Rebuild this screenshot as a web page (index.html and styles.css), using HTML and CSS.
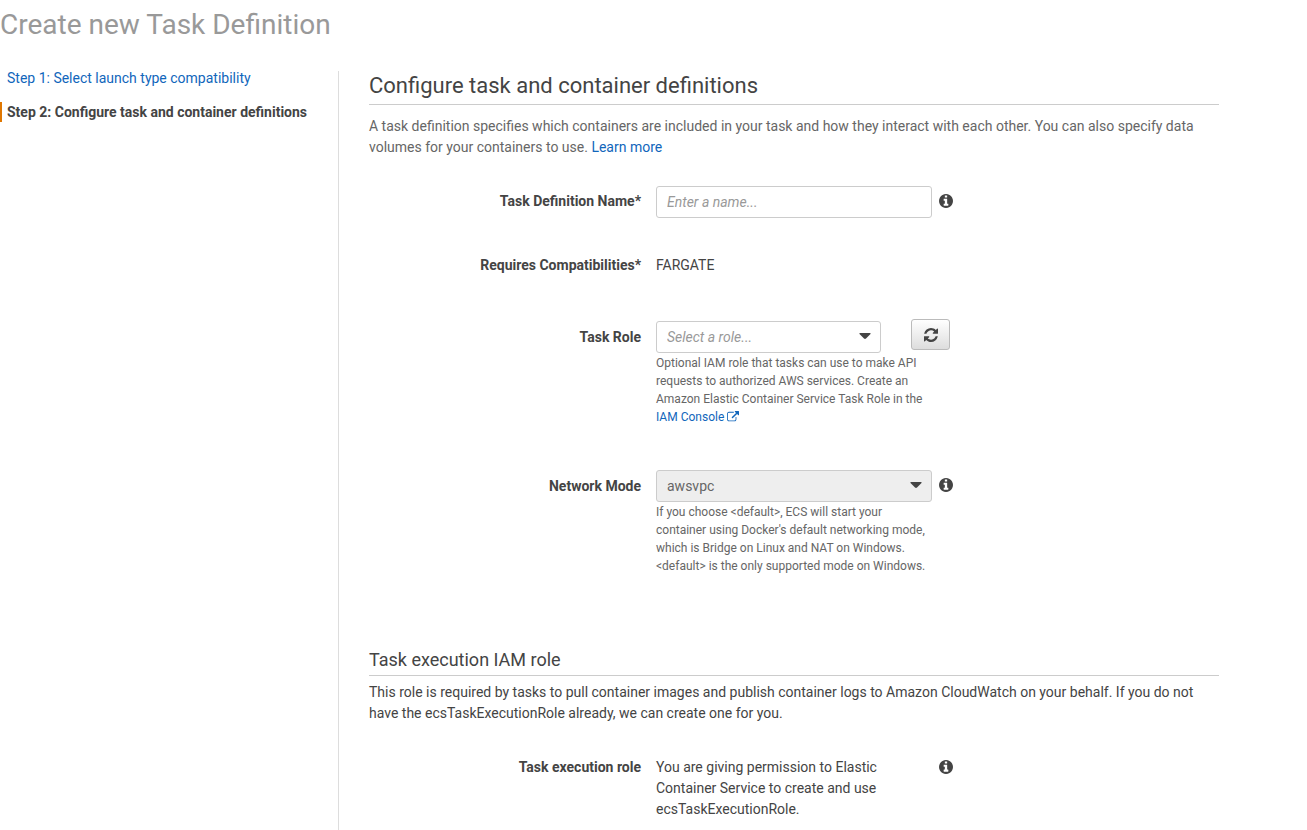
FILE: index.html
```html
<!DOCTYPE html>
<html lang="en">
<head>
<meta charset="utf-8">
<meta name="viewport" content="width=device-width, initial-scale=1">
<title>Create new Task Definition</title>
<link rel="stylesheet" href="styles.css">
</head>
<body>
<svg class="sprite" aria-hidden="true">
  <symbol id="icon-info" viewBox="128 128 1536 1536"><path d="M1152 1376v-160q0-14-9-23t-23-9h-96v-512q0-14-9-23t-23-9h-320q-14 0-23 9t-9 23v160q0 14 9 23t23 9h96v320h-96q-14 0-23 9t-9 23v160q0 14 9 23t23 9h448q14 0 23-9t9-23zm-128-896v-160q0-14-9-23t-23-9h-192q-14 0-23 9t-9 23v160q0 14 9 23t23 9h192q14 0 23-9t9-23zm640 416q0 209-103 385.5t-279.5 279.5-385.5 103-385.5-103-279.5-279.5-103-385.5 103-385.5 279.5-279.5 385.5-103 385.5 103 279.5 279.5 103 385.5z"/></symbol>
  <symbol id="icon-refresh" viewBox="128 128 1536 1536"><path d="M1639 1056q0 5-1 7-64 268-268 434.5t-478 166.5q-146 0-282.5-55t-243.5-157l-129 129q-19 19-45 19t-45-19-19-45v-448q0-26 19-45t45-19h448q26 0 45 19t19 45-19 45l-137 137q71 66 161 102t187 36q134 0 250-65t186-179q11-17 53-117 8-23 30-23h192q13 0 22.5 9.5t9.5 22.5zm25-800v448q0 26-19 45t-45 19h-448q-26 0-45-19t-19-45 19-45l138-138q-148-137-349-137-134 0-250 65t-186 179q-11 17-53 117-8 23-30 23h-199q-13 0-22.5-9.5t-9.5-22.5v-7q65-268 270-434.5t480-166.5q146 0 284 55.5t245 156.5l130-129q19-19 45-19t45 19 19 45z"/></symbol>
  <symbol id="icon-external" viewBox="0 0 1792 1792"><path d="M1408 928v320q0 119-84.5 203.5t-203.5 84.5h-832q-119 0-203.5-84.5t-84.5-203.5v-832q0-119 84.5-203.5t203.5-84.5h704q14 0 23 9t9 23v64q0 14-9 23t-23 9h-704q-66 0-113 47t-47 113v832q0 66 47 113t113 47h832q66 0 113-47t47-113v-320q0-14 9-23t23-9h64q14 0 23 9t9 23zm384-864v512q0 26-19 45t-45 19-45-19l-176-176-652 652q-10 10-23 10t-23-10l-114-114q-10-10-10-23t10-23l652-652-176-176q-19-19-19-45t19-45 45-19h512q26 0 45 19t19 45z"/></symbol>
  <symbol id="icon-caret" viewBox="0 0 12 6"><path d="M1 0h10q1 0 .5 1L7 5.500q-1 .8-2 0L.5 1Q0 0 1 0z"/></symbol>
</svg>

<h1 class="page-title">Create new Task Definition</h1>

<div class="wizard">
  <nav class="steps" aria-label="Steps">
    <ol class="step-list">
      <li class="step"><a class="link" href="#">Step 1: Select launch type compatibility</a></li>
      <li class="step step-current" aria-current="step">Step 2: Configure task and container definitions</li>
    </ol>
  </nav>

  <main class="content">
    <form class="panel">
      <h2 class="heading">Configure task and container definitions</h2>
      <p class="intro">A task definition specifies which containers are included in your task and how they interact with each other. You can also specify data volumes for your containers to use. <a class="link" href="#">Learn more</a></p>

      <div class="fields">
        <div class="row">
          <label class="label" for="name">Task Definition Name*</label>
          <div class="field"><input class="control" id="name" type="text" placeholder="Enter a name..."></div>
          <button class="info" type="button" aria-label="About the task definition name"><svg class="icon"><use href="#icon-info"/></svg></button>
        </div>

        <div class="row row-text">
          <span class="label">Requires Compatibilities*</span>
          <div class="field value">FARGATE</div>
        </div>

        <div class="row row-select row-role">
          <label class="label" for="role">Task Role</label>
          <div class="field">
            <div class="select select-role">
              <select class="control control-empty" id="role"><option>Select a role...</option></select>
              <svg class="caret" aria-hidden="true"><use href="#icon-caret"/></svg>
            </div>
            <p class="help">Optional IAM role that tasks can use to make API requests to authorized AWS services. Create an Amazon Elastic Container Service Task Role in the <a class="link" href="#">IAM Console <svg class="icon-link" aria-hidden="true"><use href="#icon-external"/></svg></a></p>
          </div>
          <button class="refresh" type="button" aria-label="Refresh roles"><svg class="icon"><use href="#icon-refresh"/></svg></button>
        </div>

        <div class="row row-select">
          <label class="label" for="network">Network Mode</label>
          <div class="field">
            <div class="select">
              <select class="control" id="network" disabled><option>awsvpc</option></select>
              <svg class="caret" aria-hidden="true"><use href="#icon-caret"/></svg>
            </div>
            <p class="help">If you choose &lt;default&gt;, ECS will start your container using Docker's default networking mode, which is Bridge on Linux and NAT on Windows. &lt;default&gt; is the only supported mode on Windows.</p>
          </div>
          <button class="info" type="button" aria-label="About the network mode"><svg class="icon"><use href="#icon-info"/></svg></button>
        </div>
      </div>

      <section class="section">
        <h3 class="subheading">Task execution IAM role</h3>
        <p class="section-text">This role is required by tasks to pull container images and publish container logs to Amazon CloudWatch on your behalf. If you do not have the ecsTaskExecutionRole already, we can create one for you.</p>
        <div class="row row-text">
          <span class="label">Task execution role</span>
          <div class="field value">You are giving permission to Elastic Container Service to create and use ecsTaskExecutionRole.</div>
          <button class="info" type="button" aria-label="About the task execution role"><svg class="icon"><use href="#icon-info"/></svg></button>
        </div>
      </section>
    </form>
  </main>
</div>
</body>
</html>
```

FILE: styles.css
```css
* {
  box-sizing: border-box;
}

body {
  margin: 0;
  display: flex;
  flex-direction: column;
  min-height: 100vh;
  background: #fff;
  color: #444;
  font: 14px/21px Roboto, "Liberation Sans", sans-serif;
}

h1, h2, h3, p, ol {
  margin: 0;
  padding: 0;
  font-weight: 400;
}

.sprite {
  position: absolute;
  width: 0;
  height: 0;
}

.link {
  color: #1166bb;
  text-decoration: none;
}

.page-title {
  padding: 5px 0 26px;
  color: #999;
  font-size: 28px;
  line-height: 40px;
}

.wizard {
  display: flex;
  flex: 1;
}

.steps {
  flex: 0 0 338px;
}

.step-list {
  margin-top: -3px;
  list-style: none;
}

.step {
  margin-bottom: 14px;
  padding-left: 7px;
  line-height: 20px;
}

.step-current {
  border-left: 2px solid #e07700;
  padding-left: 5px;
  font-weight: 700;
}

.content {
  flex: 1;
  padding: 0 88px 0 30px;
  border-left: 1px solid #ddd;
}

.heading {
  padding-bottom: 4px;
  border-bottom: 1px solid #ccc;
  font-size: 22px;
  line-height: 29px;
}

.intro {
  padding-top: 11px;
  color: #666;
}

.fields {
  display: flex;
  flex-direction: column;
  padding-top: 28px;
}

.row {
  display: grid;
  grid-template-columns: 32% 276px auto;
  justify-content: start;
  align-items: start;
  column-gap: 15px;
  margin-bottom: 37px;
}

.label {
  padding-top: 5px;
  font-weight: 700;
  text-align: right;
}

.row-text .label {
  padding-top: 0;
}

.row-select .label {
  padding-top: 6px;
}

.row-role {
  margin: 8px 0 44px;
}

.control {
  display: block;
  width: 100%;
  height: 32px;
  padding: 0 10px;
  border: 1px solid #ccc;
  border-radius: 3px;
  background: #fff;
  color: #444;
  font: inherit;
  appearance: none;
}

.control::placeholder {
  color: #999;
  font-style: italic;
  opacity: 1;
}

.control-empty {
  color: #999;
  font-style: italic;
}

.control:disabled {
  background: #eee;
  color: #666;
  opacity: 1;
}

.select {
  position: relative;
}

.select-role {
  width: 225px;
}

.caret {
  position: absolute;
  top: 12px;
  right: 10px;
  width: 12px;
  height: 6px;
  fill: #444;
  pointer-events: none;
}

.help {
  padding-top: 1px;
  color: #666;
  font-size: 12px;
  line-height: 18px;
}

.icon {
  display: block;
  width: 14px;
  height: 14px;
  fill: #444;
}

.icon-link {
  width: 12px;
  height: 12px;
  fill: currentColor;
  vertical-align: -2px;
}

.info {
  margin: 8px 0 0 -8px;
  padding: 0;
  border: 0;
  background: none;
}

.row-text .info {
  margin-top: 3px;
}

.refresh {
  display: grid;
  place-items: center;
  width: 39px;
  height: 31px;
  margin: -2px 0 0 -36px;
  padding: 0;
  border: 1px solid #bbb;
  border-radius: 3px;
  background: linear-gradient(#fff, #ddd);
}

.section {
  padding-top: 36px;
}

.subheading {
  padding-bottom: 3px;
  border-bottom: 1px solid #ccc;
  font-size: 18px;
  line-height: 24px;
}

.section-text {
  padding: 6px 0 33px;
}

.section .row {
  margin-bottom: 10px;
}
```
